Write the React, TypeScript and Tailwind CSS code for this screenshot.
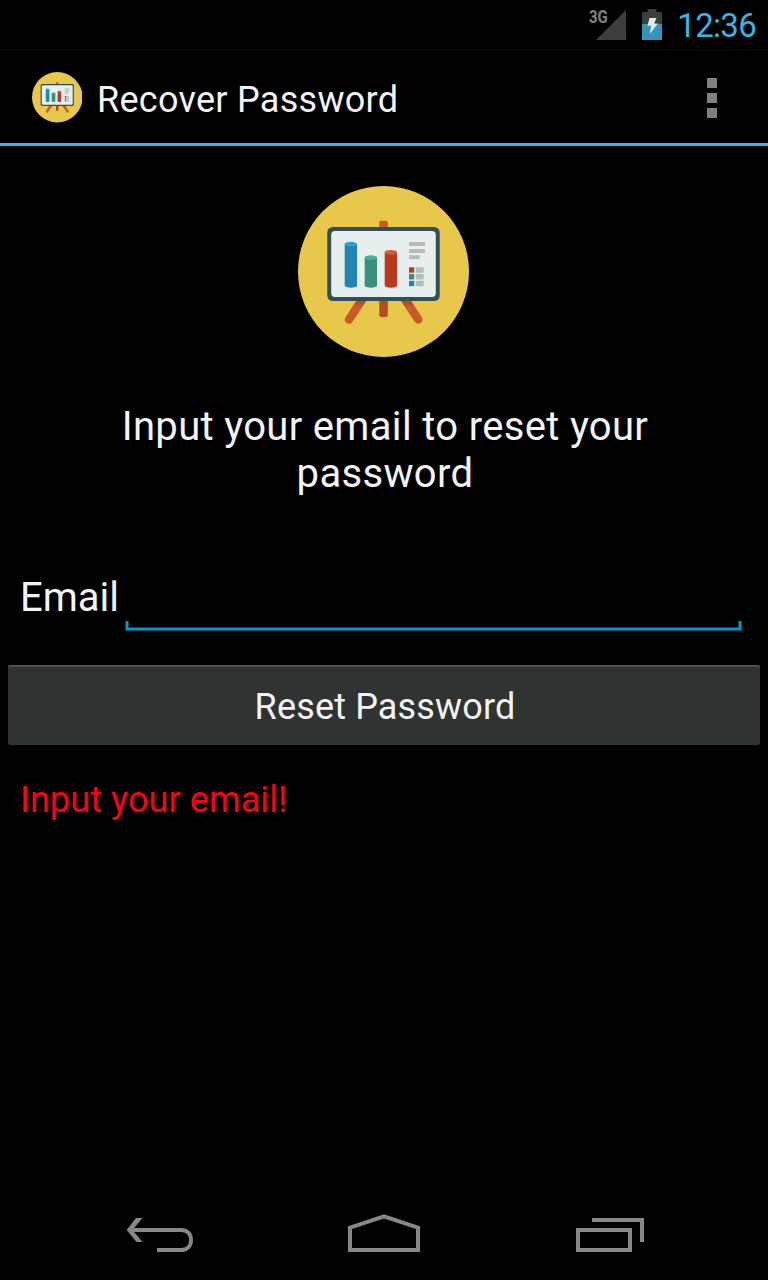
import React from "react";

function ChartBoardIcon({ className }: { className: string }) {
  return (
    <svg viewBox="0 0 171 171" className={className} aria-hidden="true">
      <defs>
        <linearGradient id="leg" gradientUnits="userSpaceOnUse" x1="0" y1="114" x2="0" y2="121">
          <stop offset="0.3" stopColor="#b34b23" />
          <stop offset="1" stopColor="#cb5829" />
        </linearGradient>
      </defs>
      <circle cx="85.5" cy="85.5" r="85.5" fill="#e8c84b" />
      <g stroke="url(#leg)" strokeWidth="8.6" strokeLinecap="round">
        <path d="M67.500 108.500L51 133.500" />
        <path d="M103.800 108.500L120.300 133.500" />
      </g>
      <rect x="81.300" y="34.700" width="8.500" height="20" rx="2" fill="#cb5829" />
      <rect x="81.300" y="100" width="8.500" height="31" rx="2" fill="#b34b23" />
      <rect x="29.300" y="41" width="112.400" height="74" rx="5.500" fill="#314e5a" />
      <rect x="33.200" y="45" width="104.600" height="66" rx="4" fill="#e7f0ef" />
      <path d="M46.700 58v41.400a6.150 2.400 0 0 0 12.300 0V58z" fill="#2186b3" />
      <ellipse cx="52.850" cy="58.100" rx="6.150" ry="2.400" fill="#2aa1d3" />
      <path d="M66.700 71.500v27.900a6.150 2.400 0 0 0 12.300 0V71.500z" fill="#37907d" />
      <ellipse cx="72.850" cy="71.700" rx="6.150" ry="2.400" fill="#40b299" />
      <path d="M86.700 66.200v33.200a6.150 2.400 0 0 0 12.300 0V66.200z" fill="#b93a20" />
      <ellipse cx="92.850" cy="66.300" rx="6.150" ry="2.400" fill="#d05a43" />
      <path
        d="M111 56h16v4h-16zM111 63h16v4h-16zM111 69.300h10.700v4H111zM117.700 81.300h8v5.400h-8zM117.700 88h8v5.400h-8zM117.700 94.800h8v5.400h-8z"
        fill="#b7bcb9"
      />
      <path d="M111 81.300h5.200v5.400H111z" fill="#b93a20" />
      <path d="M111 88h5.200v5.400H111z" fill="#37907d" />
      <path d="M111 94.800h5.200v5.400H111z" fill="#2186b3" />
    </svg>
  );
}

function StatusBar() {
  return (
    <div className="flex h-[50px] shrink-0 items-start justify-end pr-[12px]">
      <span className="mt-[8px] w-[7px] origin-left scale-x-[0.83] text-[18px] leading-[18px] font-bold text-[#808281]">3G</span>
      <svg width="30" height="30" viewBox="0 0 30 30" className="mt-[10px]" aria-hidden="true">
        <path d="M0 30L30 0V30z" fill="#3d3f3e" />
      </svg>
      <svg width="20" height="31" viewBox="0 0 20 31" className="mt-[9px] ml-[16px]" aria-hidden="true">
        <path d="M0 15V3h5.500V0h9v3H20v12z" fill="#3d3f3e" />
        <path d="M0 15h20v16H0z" fill="#3495bc" />
        <path d="M7.500 9h7l-2.300 5.500H16L7.700 25l1.500-8.300H5.500z" fill="#e4e8e4" />
      </svg>
      <span className="mt-[7px] ml-[15px] text-[33px] leading-[38px] tracking-[-0.7px] text-[#33b5e5]">12:36</span>
    </div>
  );
}

function ActionBar() {
  return (
    <header className="flex h-[96px] shrink-0 items-center border-t border-b-[3px] border-t-[#080c0c] border-b-[#33b5e5] pt-[2px] pr-[51px] pl-[31.5px]">
      <ChartBoardIcon className="mb-[1px] h-[50.5px] w-[50.5px]" />
      <h1 className="ml-[15px] pt-[4px] text-[36px] leading-[42px] tracking-[0.28px]">Recover Password</h1>
      <button aria-label="More options" className="ml-auto flex flex-col gap-[5px]">
        <span className="size-[10px] bg-[#808080]" />
        <span className="size-[10px] bg-[#808080]" />
        <span className="size-[10px] bg-[#808080]" />
      </button>
    </header>
  );
}

function EmailField() {
  return (
    <div className="mt-[70px] flex h-[64px] items-start pl-[20px]">
      <label htmlFor="email" className="w-[105px] pt-[7px] text-[40px] leading-[48px]">
        Email
      </label>
      <div className="flex h-[64px] w-[617px] flex-col">
        <input id="email" type="email" className="h-[54px] w-full bg-transparent text-[36px] outline-none" />
        <div className="h-[10px] border-x border-b border-[#004d66]">
          <div className="h-[9px] border-x-2 border-b-2 border-[#0099cc]">
            <div className="h-[7px] border-x border-b border-[#004d66]" />
          </div>
        </div>
      </div>
    </div>
  );
}

function NavigationBar() {
  return (
    <nav className="mt-auto flex h-[96px] shrink-0 items-center pt-[4px] pl-[126px]">
      <button aria-label="Back">
        <svg width="68" height="40" viewBox="0 0 68 40" fill="none" stroke="#868887" strokeWidth="4">
          <path d="M4 16H55C61 16 65 20 65 26S61 36 55 36H31" />
          <path d="M12 4L10 4L1 15.500V16.500L10.500 28H16.500L6.500 16L16.500 4z" fill="#868887" stroke="none" />
        </svg>
      </button>
      <button aria-label="Home" className="ml-[154px]">
        <svg width="72" height="40" viewBox="0 0 72 40" fill="none" stroke="#868887" strokeWidth="4">
          <path d="M2 36V13.700L36 2.300L70 13.700V36z" />
        </svg>
      </button>
      <button aria-label="Recent apps" className="ml-[156px]">
        <svg width="68" height="40" viewBox="0 0 68 40" fill="none" stroke="#868887" strokeWidth="4">
          <path d="M2 16H54V36H2zM16 6H66V28" />
        </svg>
      </button>
    </nav>
  );
}

export default function App() {
  return (
    <div className="flex h-[1280px] w-[768px] flex-col overflow-hidden bg-black font-['Roboto',sans-serif] text-[#f3f3f3]">
      <StatusBar />
      <ActionBar />
      <main className="flex flex-col">
        <ChartBoardIcon className="mt-[40px] mr-[2px] h-[171px] w-[171px] self-center" />
        <p className="mx-auto mt-[46px] w-[562px] pl-[2px] text-center text-[40px] leading-[47px] tracking-[0.33px]">
          Input your email to reset your password
        </p>
        <EmailField />
        <button className="mx-[8px] mt-[34px] flex h-[80px] items-center justify-center rounded-[2px] border-t border-[#5a5c5b] bg-[#2f3331] pt-[3px] pl-[2px] text-[36px] leading-[42px] tracking-[0.15px] shadow-[inset_0_1px_0_#454846]">
          Reset Password
        </button>
        <p className="mt-[34px] pl-[20px] text-[36px] leading-[42px] tracking-[0.1px] text-[#ff0010]">Input your email!</p>
      </main>
      <NavigationBar />
    </div>
  );
}
